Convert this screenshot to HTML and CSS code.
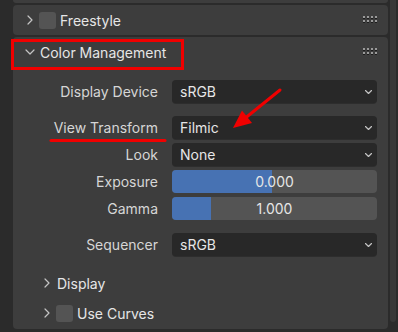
FILE: index.html
```html
<!DOCTYPE html>
<html lang="en">
<head>
    <meta charset="UTF-8">
    <meta name="viewport" content="width=device-width, initial-scale=1.0">
    <title>Color Management</title>
    <link rel="stylesheet" href="styles.css">
</head>
<body>
    <div class="screen">
        <div class="tabs"></div>
        <div class="editor">
            <div class="panel stub"></div>

            <div class="panel">
                <div class="panel-header">
                    <svg class="chev" viewBox="0 0 10 10"><polyline points="3,1 7,5 3,9"/></svg>
                    <span class="checkbox"></span>
                    <span class="title">Freestyle</span>
                    <svg class="grip" viewBox="0 0 16 8">
                        <g class="grip-shadow"><rect x="0" y="1" width="2" height="2"/><rect x="4" y="1" width="2" height="2"/><rect x="8" y="1" width="2" height="2"/><rect x="12" y="1" width="2" height="2"/><rect x="0" y="5" width="2" height="2"/><rect x="4" y="5" width="2" height="2"/><rect x="8" y="5" width="2" height="2"/><rect x="12" y="5" width="2" height="2"/></g>
                        <g class="grip-dot"><rect x="0" y="0" width="2" height="2"/><rect x="4" y="0" width="2" height="2"/><rect x="8" y="0" width="2" height="2"/><rect x="12" y="0" width="2" height="2"/><rect x="0" y="4" width="2" height="2"/><rect x="4" y="4" width="2" height="2"/><rect x="8" y="4" width="2" height="2"/><rect x="12" y="4" width="2" height="2"/></g>
                    </svg>
                </div>
            </div>

            <div class="panel panel-main">
                <div class="panel-header">
                    <svg class="chev" viewBox="0 0 10 10"><polyline points="1,3 5,7 9,3"/></svg>
                    <span class="title title-open">Color Management</span>
                    <svg class="grip" viewBox="0 0 16 8">
                        <g class="grip-shadow"><rect x="0" y="1" width="2" height="2"/><rect x="4" y="1" width="2" height="2"/><rect x="8" y="1" width="2" height="2"/><rect x="12" y="1" width="2" height="2"/><rect x="0" y="5" width="2" height="2"/><rect x="4" y="5" width="2" height="2"/><rect x="8" y="5" width="2" height="2"/><rect x="12" y="5" width="2" height="2"/></g>
                        <g class="grip-dot"><rect x="0" y="0" width="2" height="2"/><rect x="4" y="0" width="2" height="2"/><rect x="8" y="0" width="2" height="2"/><rect x="12" y="0" width="2" height="2"/><rect x="0" y="4" width="2" height="2"/><rect x="4" y="4" width="2" height="2"/><rect x="8" y="4" width="2" height="2"/><rect x="12" y="4" width="2" height="2"/></g>
                    </svg>
                </div>

                <div class="props">
                    <div class="group">
                        <div class="prop-row">
                            <span class="prop-label">Display Device</span>
                            <div class="field dropdown">sRGB<svg class="drop-chev" viewBox="0 0 7 4"><polyline points="0.5,0.5 3.5,3.5 6.5,0.5"/></svg></div>
                        </div>
                    </div>
                    <div class="group">
                        <div class="prop-row">
                            <span class="prop-label">View Transform</span>
                            <div class="field dropdown">Filmic<svg class="drop-chev" viewBox="0 0 7 4"><polyline points="0.5,0.5 3.5,3.5 6.5,0.5"/></svg></div>
                        </div>
                        <div class="prop-row">
                            <span class="prop-label">Look</span>
                            <div class="field dropdown">None<svg class="drop-chev" viewBox="0 0 7 4"><polyline points="0.5,0.5 3.5,3.5 6.5,0.5"/></svg></div>
                        </div>
                        <div class="prop-row">
                            <span class="prop-label">Exposure</span>
                            <div class="field slider"><div class="slider-fill" style="width: 49%"></div><span class="slider-value">0.000</span></div>
                        </div>
                        <div class="prop-row">
                            <span class="prop-label">Gamma</span>
                            <div class="field slider"><div class="slider-fill" style="width: 19%"></div><span class="slider-value">1.000</span></div>
                        </div>
                    </div>
                    <div class="group">
                        <div class="prop-row">
                            <span class="prop-label">Sequencer</span>
                            <div class="field dropdown">sRGB<svg class="drop-chev" viewBox="0 0 7 4"><polyline points="0.5,0.5 3.5,3.5 6.5,0.5"/></svg></div>
                        </div>
                    </div>
                </div>

                <div class="subpanels">
                    <div class="subpanel">
                        <svg class="chev" viewBox="0 0 10 10"><polyline points="3,1 7,5 3,9"/></svg>
                        <span class="title">Display</span>
                    </div>
                    <div class="subpanel">
                        <svg class="chev" viewBox="0 0 10 10"><polyline points="3,1 7,5 3,9"/></svg>
                        <span class="checkbox"></span>
                        <span class="title">Use Curves</span>
                    </div>
                </div>
            </div>
        </div>
        <div class="scrollbar"><div class="thumb"></div></div>

        <!-- red markup drawn over the screenshot -->
        <svg class="annot" viewBox="0 0 398 332">
            <rect x="12.5" y="40.5" width="170" height="28"/>
            <line x1="51" y1="140.5" x2="165" y2="140.5"/>
            <line x1="280" y1="90" x2="246" y2="117.5"/>
            <polygon points="233,128 252,123 242,110.5"/>
        </svg>
    </div>
</body>
</html>
```

FILE: styles.css
```css
* {
    box-sizing: border-box;
}

body {
    margin: 0;
    background-color: #2b2b2b;
    font-family: Inter, "DejaVu Sans", sans-serif;
    font-size: 14px;
    color: #e6e6e6;
}

.screen {
    position: relative;
    width: 398px;
    height: 332px;
    display: flex;
    overflow: hidden;
}

.tabs {
    width: 13px;
    background-color: #2b2b2b;
}

.editor {
    width: 375px;
    display: flex;
    flex-direction: column;
    gap: 2px;
}

.panel {
    background-color: #3d3d3d;
    border-radius: 4px;
}

.stub {
    height: 3px;
    border-radius: 0 0 4px 4px;
}

.panel-main {
    height: 292px;
}

.panel-header {
    height: 30px;
    display: flex;
    align-items: center;
    padding-left: 12px;
    padding-right: 9px;
}

.chev {
    width: 10px;
    height: 10px;
    flex-shrink: 0;
}

.chev polyline,
.drop-chev polyline {
    fill: none;
    stroke: #c4c4c4;
    stroke-width: 1.2;
    stroke-linecap: round;
    stroke-linejoin: round;
}

.checkbox {
    width: 17px;
    height: 17px;
    margin-left: 4px;
    border-radius: 3px;
    background-color: #545454;
    flex-shrink: 0;
}

.title {
    margin-left: 4px;
    white-space: nowrap;
}

.title-open {
    margin-left: 5px;
}

.grip {
    width: 16px;
    height: 8px;
    margin-left: auto;
}

.grip-dot rect {
    fill: #9a9a9a;
}

.grip-shadow rect {
    fill: #1c1c1c;
}

.props {
    padding: 13px 11px 0 0;
}

.group {
    display: flex;
    flex-direction: column;
    gap: 4px;
    margin-bottom: 13px;
}

.prop-row {
    height: 23px;
    display: flex;
    align-items: center;
}

.prop-label {
    flex: 1;
    text-align: right;
    padding-right: 14px;
    color: #d6d6d6;
    white-space: nowrap;
}

.field {
    width: 205px;
    height: 23px;
    border-radius: 4px;
    display: flex;
    align-items: center;
}

.dropdown {
    background-color: #282828;
    padding-left: 8px;
    padding-right: 5px;
    box-shadow: 0 1px 0 rgba(0, 0, 0, 0.25);
}

.drop-chev {
    width: 7px;
    height: 4px;
    margin-left: auto;
}

.slider {
    position: relative;
    background-color: #545454;
    justify-content: center;
    overflow: hidden;
}

.slider-fill {
    position: absolute;
    left: 0;
    top: 0;
    bottom: 0;
    background-color: #4772b3;
}

.slider-value {
    position: relative;
}

.subpanels {
    margin-top: -1px;
}

.subpanel {
    height: 30px;
    display: flex;
    align-items: center;
    padding-left: 29px;
}

.subpanel .title {
    margin-left: 5px;
}

.subpanel .checkbox {
    margin-left: 4px;
}

.subpanel .checkbox + .title {
    margin-left: 4px;
}

.scrollbar {
    width: 10px;
    padding: 0 2px 10px 2px;
    background-color: #2b2b2b;
}

.thumb {
    height: 100%;
    background-color: #383838;
    border-radius: 0 0 3px 3px;
}

.annot {
    position: absolute;
    left: 0;
    top: 0;
    width: 398px;
    height: 332px;
    pointer-events: none;
}

.annot rect,
.annot line {
    fill: none;
    stroke: #f00000;
    stroke-width: 3;
    stroke-linecap: round;
}

.annot polygon {
    fill: #f00000;
}
```
